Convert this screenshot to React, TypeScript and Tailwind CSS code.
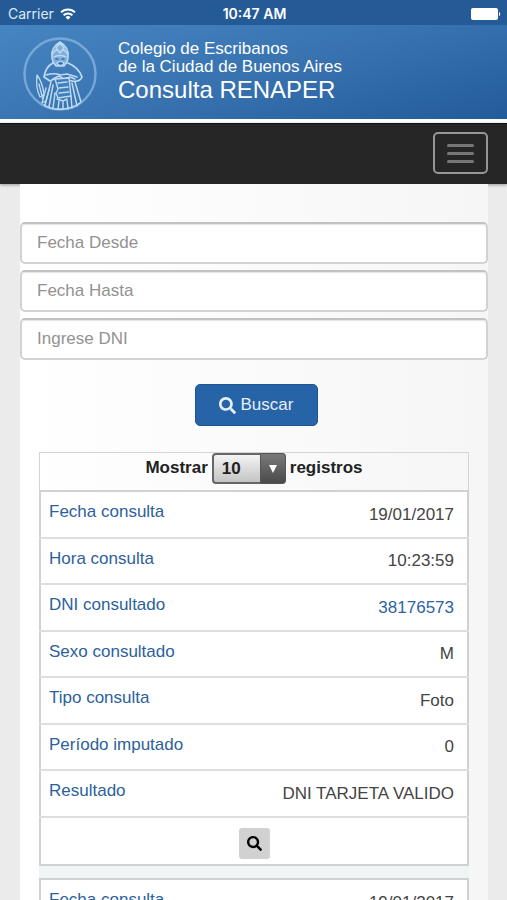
import { FaSearch } from 'react-icons/fa'

interface Field {
  label: string
  value: string
  link?: boolean
}

const FILTERS = [
  { id: 'desde', label: 'Fecha Desde' },
  { id: 'hasta', label: 'Fecha Hasta' },
  { id: 'dni', label: 'Ingrese DNI' },
]

const RECORDS: Field[][] = [
  [
    { label: 'Fecha consulta', value: '19/01/2017' },
    { label: 'Hora consulta', value: '10:23:59' },
    { label: 'DNI consultado', value: '38176573', link: true },
    { label: 'Sexo consultado', value: 'M' },
    { label: 'Tipo consulta', value: 'Foto' },
    { label: 'Período imputado', value: '0' },
    { label: 'Resultado', value: 'DNI TARJETA VALIDO' },
  ],
  [{ label: 'Fecha consulta', value: '19/01/2017' }],
]

function StatusBar() {
  return (
    <div className="grid h-[25px] shrink-0 grid-cols-3 items-center bg-[#245b96] pt-[3px] pr-1.5 pl-2 font-['Inter',sans-serif] text-sm text-white">
      <div className="flex items-center gap-1.5 text-[#dde9f5]">
        Carrier
        <svg viewBox="0 0 16 12" className="h-3 w-4" fill="none" stroke="white" strokeWidth="2">
          <path d="M1 4.4a10 10 0 0 1 14 0" />
          <path d="M3.6 7.2a6.3 6.3 0 0 1 8.8 0" />
          <path d="M8 11.8 5.5 9.2a3.6 3.6 0 0 1 5 0z" fill="white" stroke="none" />
        </svg>
      </div>
      <div className="text-center font-semibold">10:47 AM</div>
      <svg viewBox="0 0 30 12" className="h-3 w-[30px] justify-self-end" fill="white">
        <rect width="27" height="12" rx="2" />
        <path d="M28 4c1.6.4 1.6 3.6 0 4z" />
      </svg>
    </div>
  )
}

function Emblem() {
  return (
    <svg viewBox="0 0 76 76" className="mt-1 size-[76px] shrink-0" fill="none" stroke="#bedaf1" strokeLinecap="round" strokeLinejoin="round">
      <circle cx="38" cy="38" r="35.5" stroke="#75a8d6" strokeWidth="2.4" />
      {/* helmet and face */}
      <path d="M30 22c-1-6 1-12 8-16 7 4 9 10 8 16l-1 4-3 4h-8l-3-4z" fill="#7fb0db" strokeWidth="1.5" />
      <path d="M34 12l4-5 4 5M31 17l4-4 3 4 3-4 4 4M32 21c3-2 9-2 12 0" strokeWidth="1.3" />
      <path d="M34 23h2M40 23h2" stroke="#2f6dab" strokeWidth="1.5" />
      <path d="M35 27c2-2 5-2 7 0-1 3-6 3-7 0z" fill="#2f6dab" strokeWidth="1.2" />
      {/* cape and arms */}
      <path d="M31 27c-6 3-8 8-9 14l6 4 6-3M46 27c7 3 12 8 14 14-2 5-8 5-14 3" strokeWidth="1.8" />
      <path d="M24 39c7-2 10-2 14 0l7-1 10 3M31 43l6-3 5 3 6-2 5 2" strokeWidth="1.6" />
      {/* scroll */}
      <path d="M33 43l14-1 2 18-13 2-2-5 2-4z" fill="#3f7fbd" strokeWidth="1.4" />
      <path d="M36 47l9-1M37 52l9-1M37 57l10-1M35 63l6 2 4-2" strokeWidth="1.4" />
      {/* robe folds */}
      <path d="M29 46l-6 23M31 49l-4 22M33 57l-2 15M37 65l-1 8M41 66v7M45 64l1 9M49 60l1 12M50 47l5 23M53 46l6 20" strokeWidth="1.5" />
      <path d="M22 69c8 6 26 6 36-2" strokeWidth="1.4" />
      {/* quill */}
      <path d="M15 39c-1 8 0 16 3 22l4-3c-1-7-3-14-7-19zM17 48l4 16M24 52l-4 15 4-2 3-11" strokeWidth="1.3" />
    </svg>
  )
}

function Header() {
  return (
    <header className="flex shrink-0 items-center gap-5 border-b-4 border-white bg-linear-165 from-[#4685c1] via-[#3873b0] to-[#245b9b] pl-[22px] text-white">
      <Emblem />
      <div className="py-[15px] text-[17px]/[18px]">
        <p>Colegio de Escribanos</p>
        <p>de la Ciudad de Buenos Aires</p>
        <h1 className="text-2xl/[28px]">Consulta RENAPER</h1>
      </div>
    </header>
  )
}

function Navbar() {
  return (
    <nav className="flex shrink-0 justify-end border-t border-[#111] bg-[#262626] px-[19px] pt-2 pb-2.5 shadow-[0_1px_3px_#999]">
      <button
        aria-label="Menú"
        className="flex h-[42px] w-[55px] flex-col items-center justify-center gap-[5px] rounded-[5px] border-2 border-[#969696]"
      >
        <span className="h-[3px] w-[27px] rounded-sm bg-[#777]" />
        <span className="h-[3px] w-[27px] rounded-sm bg-[#777]" />
        <span className="h-[3px] w-[27px] rounded-sm bg-[#777]" />
      </button>
    </nav>
  )
}

function PageLength() {
  return (
    <div className="flex h-[38px] items-start justify-center gap-1 border border-b-0 border-[#d5d5d5] font-bold text-[#222]">
      <label htmlFor="length" className="leading-[30px]">Mostrar</label>
      <div className="relative">
        <select
          id="length"
          defaultValue="10"
          className="block h-[31px] w-[74px] appearance-none rounded border-2 border-[#666] bg-linear-to-b from-[#f4f4f4] to-[#c4c4c4] pl-2 font-bold"
        >
          <option>10</option>
          <option>25</option>
          <option>50</option>
        </select>
        <span className="pointer-events-none absolute inset-y-0 right-0 flex w-[26px] items-center justify-center rounded-r border border-[#555] bg-linear-to-b from-[#7a7a7a] to-[#4a4a4a]">
          <svg viewBox="0 0 8 8" className="size-2" fill="white">
            <path d="M0 0h8L4 8z" />
          </svg>
        </span>
      </div>
      <span className="leading-[30px]">registros</span>
    </div>
  )
}

function RecordTable({ fields }: { fields: Field[] }) {
  return (
    <table className="w-full border-collapse border-2 border-[#cfd2d3] bg-white">
      <tbody>
        {fields.map((f) => (
          <tr key={f.label} className="h-[46px] border-b-2 border-[#dedede] odd:h-[47px]">
            <th scope="row" className="pt-2 pl-2 text-left align-top font-normal text-[#2d5f9c]">
              {f.label}
            </th>
            <td className="pr-[13px] text-right text-[#444]">
              {f.link ? <a href="#dni" className="text-[#2d64a5]">{f.value}</a> : f.value}
            </td>
          </tr>
        ))}
        <tr className="h-12">
          <td colSpan={2} className="pt-1 text-center">
            <button aria-label="Ver detalle" className="inline-flex size-[31px] items-center justify-center rounded-[3px] bg-[#d1d1d1] align-middle text-black">
              <FaSearch className="size-[15px]" />
            </button>
          </td>
        </tr>
      </tbody>
    </table>
  )
}

export default function App() {
  return (
    <div className="flex h-screen flex-col bg-[#ebebeb] font-['Liberation_Sans',Arial,sans-serif] text-[17px]/[24px]">
      <StatusBar />
      <Header />
      <Navbar />
      <main className="min-h-0 flex-1 overflow-y-auto pr-[19px] pl-5 [scrollbar-width:none]">
        <div className="bg-linear-to-r from-white to-[#f6f6f6] pt-[38px]">
          <form className="flex flex-col gap-1.5">
            {FILTERS.map((f) => (
              <input
                key={f.id}
                id={f.id}
                aria-label={f.label}
                placeholder={f.label}
                className="h-[42px] w-full rounded-[5px] border-2 border-[#d2d2d2] border-t-[#c2c2c2] bg-white px-[15px] shadow-[inset_0_1px_1px_#e4e4e4] placeholder:text-[#929292]"
              />
            ))}
            <div className="flex justify-center pt-[18px] pl-1">
              <button
                type="button"
                className="flex h-[42px] w-[123px] items-center justify-center gap-[5px] rounded-[5px] border border-[#1f5592] bg-[#2763a7] text-[#e4effa]"
              >
                <FaSearch className="size-[17px]" />
                Buscar
              </button>
            </div>
          </form>
          <section className="px-[19px] pt-[26px]">
            <PageLength />
            <div className="flex flex-col gap-3 bg-[#f0f4f5]">
              {RECORDS.map((fields, i) => (
                <RecordTable key={i} fields={fields} />
              ))}
            </div>
          </section>
        </div>
      </main>
    </div>
  )
}
